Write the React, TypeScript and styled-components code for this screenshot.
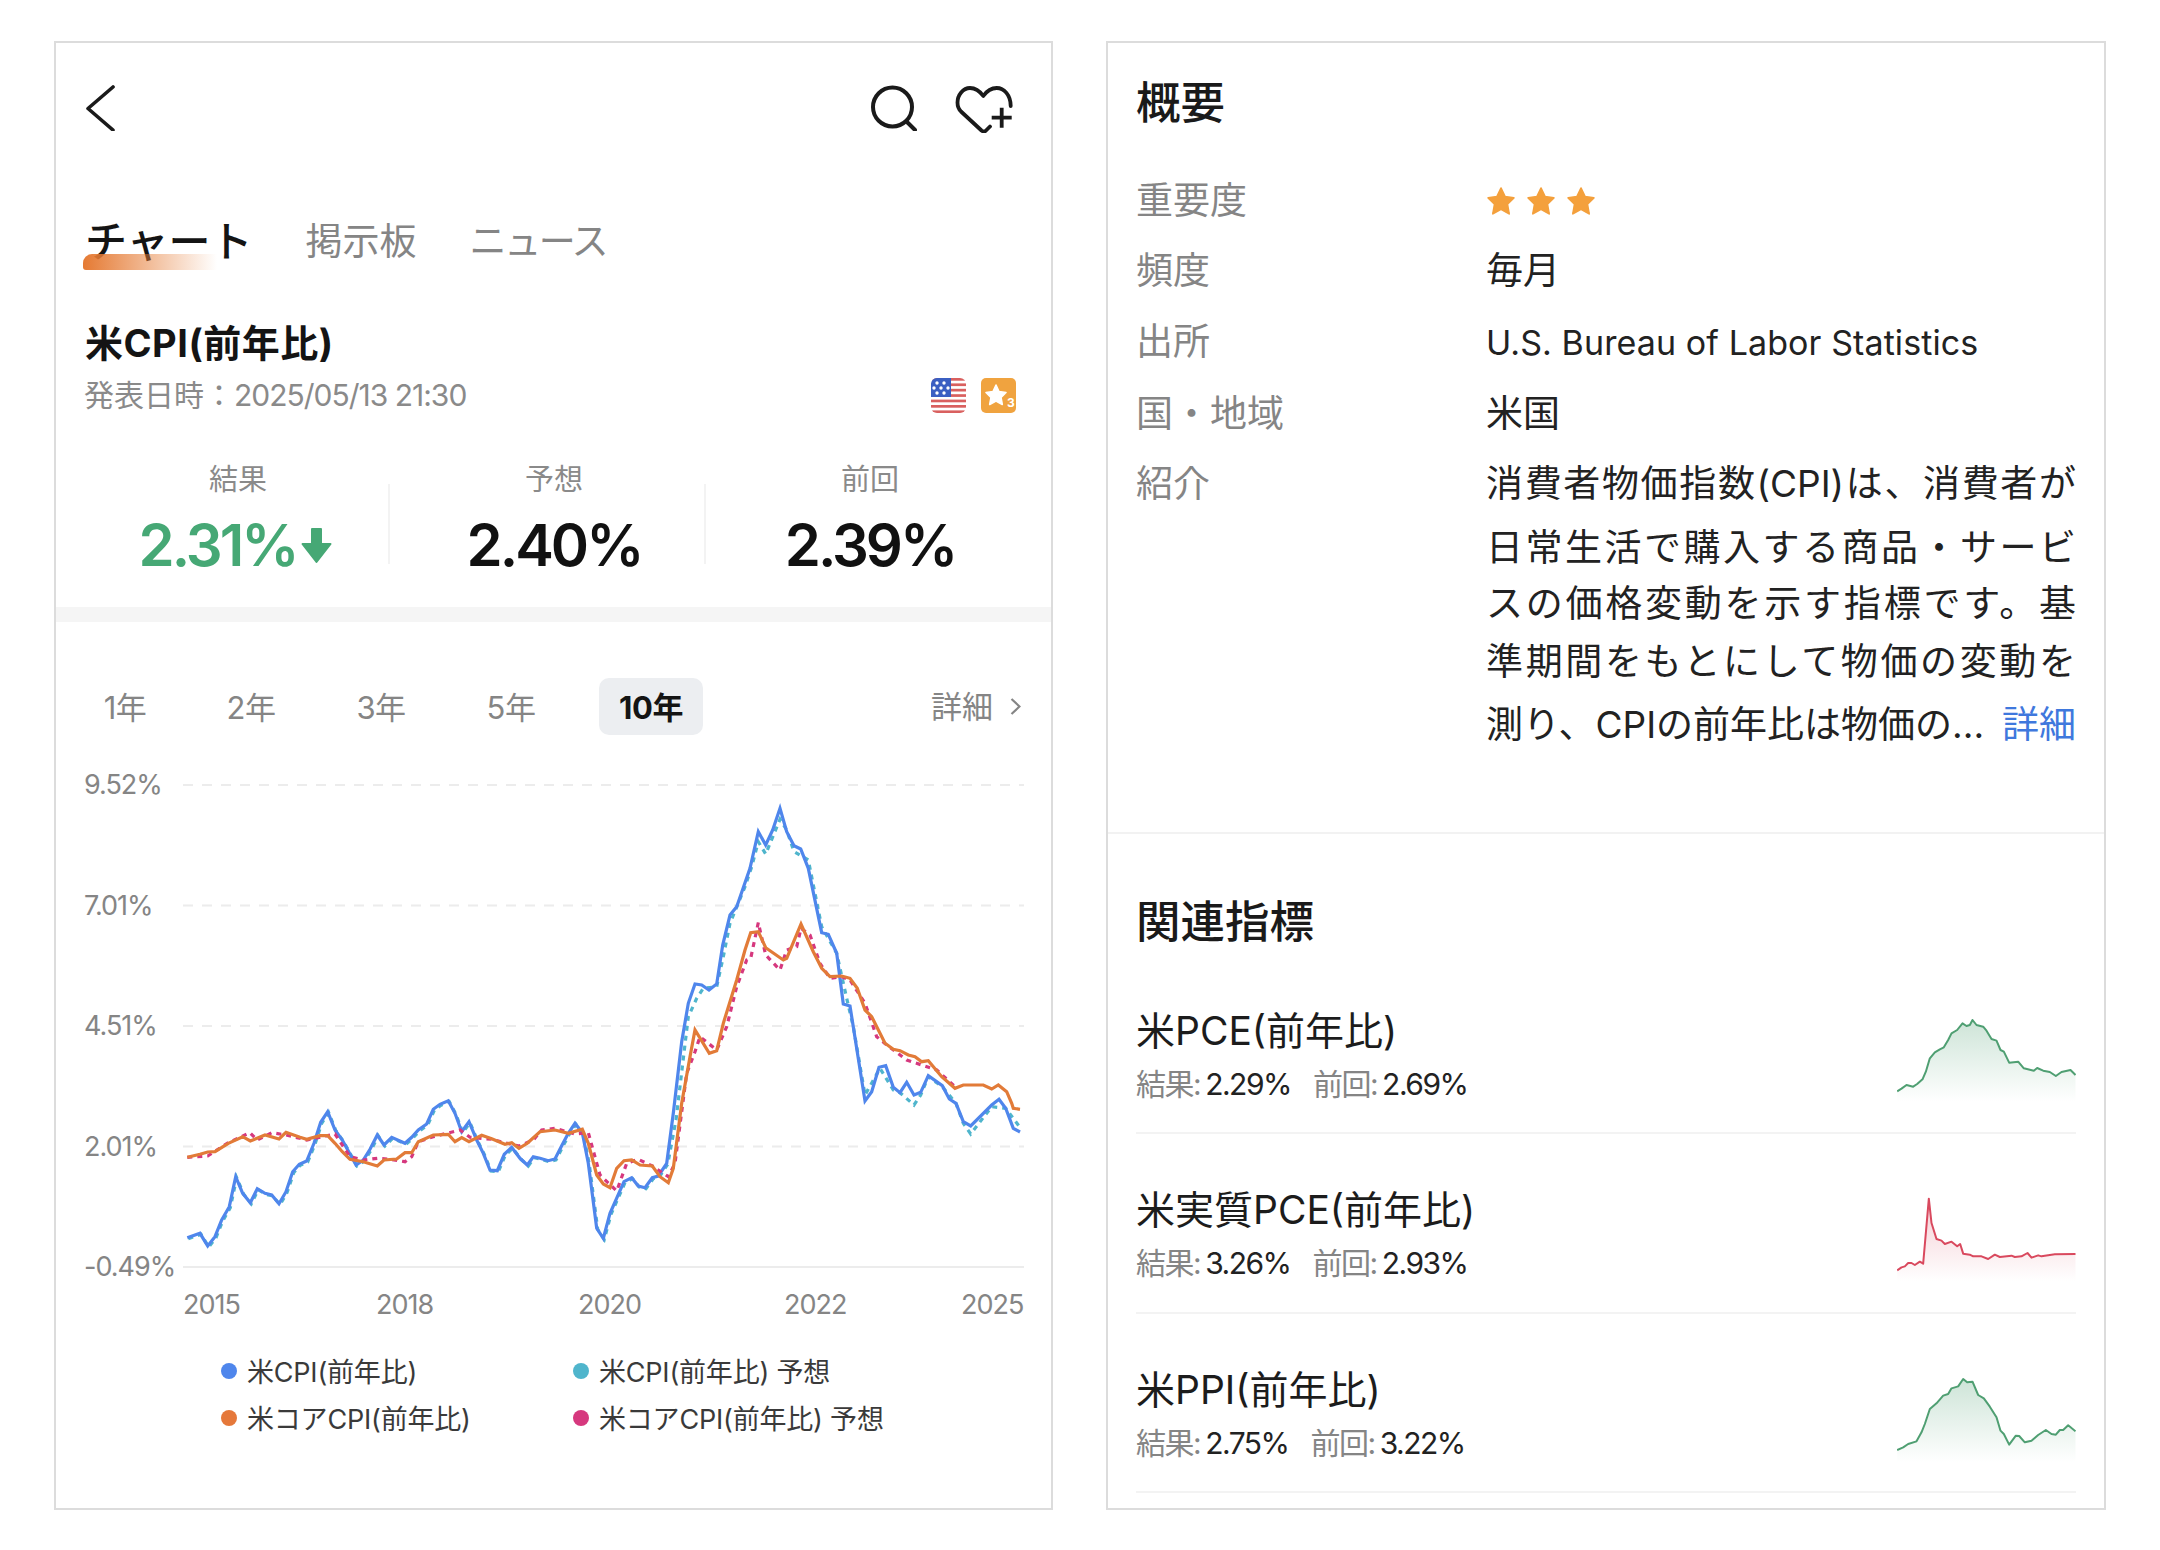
import React from 'react';
import styled, { createGlobalStyle } from 'styled-components';

const FONT = '"Inter", "Noto Sans CJK JP", sans-serif';

const GlobalStyle = createGlobalStyle`
  html, body {
    margin: 0;
    padding: 0;
    background: #fff;
    font-family: ${FONT};
    color: #1c1c1c;
  }
`;

const Page = styled.div`
  display: flex;
  gap: 53px;
  padding: 41px 54px;
`;

const Panel = styled.div`
  box-sizing: border-box;
  flex: none;
  width: ${(p: { $w: number }) => p.$w}px;
  height: 1469px;
  border: 2px solid #dcdcdc;
  overflow: hidden;
`;

const TopBar = styled.div`
  display: flex;
  align-items: flex-start;
  height: 46px;
  padding: 42px 38px 0 30px;
`;

const IconSvg = styled.svg`
  display: block;
  fill: none;
  stroke: #1a1a1a;
  stroke-linecap: round;
  stroke-linejoin: round;
  flex: none;
`;

const TopActions = styled.div`
  display: flex;
  gap: 38px;
  margin-left: auto;
`;

const Tabs = styled.div`
  display: flex;
  align-items: center;
  gap: 53px;
  height: 50px;
  margin-top: 86px;
  padding-left: 29px;
`;

const Tab = styled.div<{ $active?: boolean; $tight?: boolean }>`
  position: relative;
  font-size: ${(p) => (p.$active ? 42 : 37)}px;
  font-weight: ${(p) => (p.$active ? 500 : 400)};
  line-height: 50px;
  letter-spacing: ${(p) => (p.$tight ? -2.4 : 0)}px;
  color: ${(p) => (p.$active ? '#141414' : '#858585')};
  ${(p) =>
    p.$active &&
    `&::after {
      content: '';
      position: absolute;
      left: -2px;
      top: 37px;
      width: 134px;
      height: 16px;
      border-radius: 9px 0 0 3px;
      background: linear-gradient(90deg, #e57a33, rgba(229, 122, 51, 0));
    }`}
`;

const Title = styled.h1`
  margin: 54px 0 0;
  padding-left: 29px;
  font-size: 38px;
  line-height: 44px;
  font-weight: 700;
  letter-spacing: 0.5px;
  color: #141414;
`;

const DateRow = styled.div`
  display: flex;
  align-items: center;
  height: 35px;
  margin-top: 13px;
  padding: 0 35px 0 28px;
`;

const DateText = styled.div`
  font-size: 30px;
  line-height: 35px;
  color: #8a8a8a;
  span {
    letter-spacing: -1px;
  }
`;

const Badges = styled.div`
  display: flex;
  gap: 15px;
  margin-left: auto;
`;

const Stats = styled.div`
  display: grid;
  grid-template-columns: repeat(3, 316px);
  margin-top: 47px;
  padding-left: 24px;
`;

const Stat = styled.div<{ $divider?: boolean }>`
  position: relative;
  text-align: center;
  ${(p) =>
    p.$divider &&
    `&::after {
      content: '';
      position: absolute;
      right: 6px;
      top: 24px;
      width: 2px;
      height: 80px;
      background: #f3f3f3;
    }`}
`;

const StatLabel = styled.div`
  font-size: 29px;
  line-height: 40px;
  color: #8a8a8a;
`;

const StatValue = styled.div<{ $green?: boolean }>`
  display: flex;
  align-items: center;
  justify-content: center;
  gap: 5px;
  margin-top: 10px;
  font-size: 58px;
  line-height: 70px;
  font-weight: 600;
  letter-spacing: -3px;
  color: ${(p) => (p.$green ? '#46a875' : '#111')};
  svg {
    margin-right: 5px;
  }
`;

const Band = styled.div`
  height: 15px;
  margin-top: 27px;
  background: #f5f5f5;
`;

const RangeRow = styled.div`
  display: flex;
  align-items: center;
  gap: 52px;
  height: 57px;
  margin-top: 56px;
  padding: 0 30px 0 29px;
`;

const RangeTab = styled.div<{ $active?: boolean }>`
  box-sizing: border-box;
  display: flex;
  align-items: center;
  justify-content: center;
  width: ${(p) => (p.$active ? 104 : 78)}px;
  height: 57px;
  margin-left: ${(p) => (p.$active ? -3 : 0)}px;
  padding-bottom: 3px;
  border-radius: 10px;
  font-size: 31px;
  font-weight: ${(p) => (p.$active ? 700 : 400)};
  letter-spacing: -0.5px;
  color: ${(p) => (p.$active ? '#141414' : '#858585')};
  background: ${(p) => (p.$active ? '#eceef1' : 'transparent')};
  &:first-child {
    width: 70px;
    margin-left: 5px;
  }
`;

const DetailLink = styled.div`
  display: flex;
  align-items: center;
  gap: 17px;
  margin-left: auto;
  padding-bottom: 5px;
  font-size: 31px;
  color: #858585;
  svg {
    margin-top: 4px;
  }
`;

const ChartSvg = styled.svg`
  display: block;
  margin-top: 25px;
`;

const GridLine = styled.line<{ $solid?: boolean }>`
  stroke: #ececec;
  stroke-width: 2;
  stroke-dasharray: ${(p) => (p.$solid ? 'none' : '10 9')};
`;

const AxisText = styled.text`
  font-family: ${FONT};
  font-size: 27px;
  fill: #858585;
  letter-spacing: -1px;
`;

const SeriesLine = styled.polyline<{ $color: string; $dotted?: boolean }>`
  fill: none;
  stroke: ${(p) => p.$color};
  stroke-width: 3.2;
  stroke-dasharray: ${(p) => (p.$dotted ? '5 5' : 'none')};
  stroke-linejoin: miter;
`;

const Legend = styled.div`
  display: grid;
  grid-template-columns: repeat(2, 352px);
  grid-auto-rows: 47px;
  margin-top: 17px;
  padding-left: 165px;
`;

const LegendItem = styled.div`
  display: flex;
  align-items: center;
  gap: 10px;
  font-size: 27px;
  color: #3a3a3a;
  letter-spacing: -0.2px;
  white-space: nowrap;
`;

const LegendDot = styled.span<{ $color: string }>`
  width: 16px;
  height: 16px;
  border-radius: 50%;
  background: ${(p) => p.$color};
`;

const Overview = styled.div`
  padding: 30px 28px 0 28px;
`;

const Heading = styled.h2`
  margin: 0;
  font-size: 44.5px;
  line-height: 60px;
  font-weight: 500;
  color: #1a1a1a;
`;

const InfoList = styled.div`
  margin-top: 33px;
`;

const InfoRow = styled.div`
  display: flex;
  min-height: 70.3px;
`;

const InfoLabel = styled.div`
  flex: none;
  width: 350px;
  font-size: 37px;
  line-height: 70px;
  color: #858585;
`;

const InfoValue = styled.div`
  flex: 1;
  min-width: 0;
  font-size: 37px;
  line-height: 70px;
  color: #222;
`;

const LatinValue = styled(InfoValue)`
  font-size: 34px;
  line-height: 72px;
  letter-spacing: 0.1px;
`;

const Stars = styled.div`
  display: flex;
  align-items: center;
  gap: 10px;
  height: 70px;
`;

const ParaLine = styled.div<{ $h: number }>`
  font-size: 37px;
  line-height: ${(p) => p.$h}px;
  text-align: justify;
  text-align-last: justify;
  white-space: nowrap;
  color: #222;
`;

const LastLine = styled.div`
  display: flex;
  justify-content: space-between;
  font-size: 37px;
  line-height: 66px;
  white-space: nowrap;
  color: #222;
`;

const MoreLink = styled.span`
  color: #3f78dd;
`;

const SectionRule = styled.div`
  height: 2px;
  margin-top: 74px;
  background: #f2f2f2;
`;

const Related = styled.div`
  padding: 58px 28px 0 28px;
`;

const RelatedItem = styled.div`
  display: flex;
  justify-content: space-between;
  box-sizing: border-box;
  height: 179.5px;
  margin-top: ${(p: { $first?: boolean }) => (p.$first ? 3 : 0)}px;
  padding-top: 51px;
  border-bottom: 2px solid #f3f3f3;
`;

const ItemName = styled.div`
  font-size: 39px;
  line-height: 50px;
  color: #1c1c1c;
`;

const ItemSub = styled.div`
  display: flex;
  gap: 22px;
  margin-top: 8px;
  font-size: 30px;
  line-height: 40px;
  letter-spacing: -1.5px;
  white-space: nowrap;
`;

const SubLabel = styled.span`
  color: #858585;
`;

const SubNum = styled.span`
  margin-left: 5px;
  color: #222;
`;

const SparkSvg = styled.svg`
  display: block;
  flex: none;
  margin-top: 7px;
`;

type Pt = [number, number];

// traced from the reference, each run in its own crop coordinates (3x)
const seg = ([ox, oy]: Pt, n: number[]) => {
  const out: string[] = [];
  for (let i = 0; i < n.length; i += 2) {
    out.push(`${(ox + n[i] / 3).toFixed(1)},${(oy + n[i + 1] / 3).toFixed(1)}`);
  }
  return out;
};

const A: Pt = [170, 1060];
const B: Pt = [620, 780];
const C: Pt = [640, 1040];

const blueLeft = [
  52, 533, 90, 520, 113, 558, 135, 530, 155, 480, 178, 440, 197, 350, 218, 400, 241, 428, 262, 386, 285, 400, 305, 405,
  327, 431, 348, 395, 368, 335, 388, 313, 410, 303, 432, 250, 452, 187, 473, 155, 495, 210, 517, 240, 558, 315, 580, 300,
  600, 268, 622, 225, 642, 255, 665, 232, 705, 250, 725, 232, 745, 210, 770, 192, 790, 148, 810, 133, 835, 122, 855, 160,
  875, 215, 897, 185, 920, 240, 940, 280, 960, 330, 982, 332, 1003, 283, 1025, 262, 1050, 295, 1072, 315, 1090, 290,
  1110, 295, 1135, 302, 1155, 297, 1175, 257, 1195, 220, 1215, 190, 1237, 218, 1255, 310, 1280, 505, 1300, 535, 1320, 460,
  1362, 365, 1385, 353, 1405, 378, 1425, 383, 1447, 353, 1465, 348, 1490, 310,
];

const blue = [
  ...seg(A, blueLeft),
  ...seg(C, [100, 220]),
  ...seg(B, [
    185, 785, 205, 670, 225, 612, 245, 615, 267, 630, 290, 612, 308, 495, 330, 405, 350, 380, 390, 265, 415, 155, 437, 195,
    458, 150, 480, 85, 500, 155, 522, 197, 542, 207, 565, 265, 605, 458, 625, 463, 650, 520, 670, 672, 690, 678,
  ]),
  ...seg(C, [
    675, 183, 695, 155, 717, 82, 737, 77, 760, 142, 780, 158, 800, 127, 822, 165, 842, 157, 865, 107, 907, 137, 928, 177,
    948, 190, 970, 245, 992, 258, 1055, 195, 1077, 178, 1097, 205, 1120, 265, 1140, 276,
  ]),
].join(' ');

const teal = [
  ...seg([171, 1061], blueLeft),
  ...seg(C, [108, 240]),
  ...seg(B, [
    205, 710, 230, 655, 250, 625, 290, 620, 310, 530, 330, 430, 375, 320, 395, 260, 415, 185, 437, 222, 480, 118, 500, 150,
    522, 215, 565, 240, 605, 440, 650, 520, 680, 655, 700, 740,
  ]),
  ...seg(C, [
    675, 165, 720, 85, 760, 150, 780, 158, 822, 195, 842, 165, 865, 110, 907, 140, 948, 190, 970, 250, 992, 282, 1055, 200,
    1097, 205, 1140, 262,
  ]),
].join(' ');

const orange = [
  ...seg(A, [
    52, 292, 90, 283, 113, 276, 135, 275, 175, 250, 218, 230, 241, 243, 285, 225, 327, 237, 348, 217, 390, 232, 410, 238,
    450, 227, 473, 227, 495, 250, 517, 275, 540, 298, 580, 305, 622, 318, 642, 300, 680, 297, 705, 278, 725, 278, 745, 245,
    790, 225, 835, 223, 855, 245, 875, 233, 897, 245, 935, 226, 965, 236, 1005, 253, 1025, 248, 1047, 265, 1072, 250,
    1110, 215, 1155, 210, 1195, 220, 1237, 208, 1255, 250, 1280, 345, 1300, 372, 1320, 383, 1340, 325, 1362, 302, 1385, 300,
    1410, 315, 1447, 318, 1470, 350, 1495, 368,
  ]),
  ...seg(C, [100, 385, 125, 190, 150, 50]),
  ...seg(B, [
    225, 750, 268, 820, 290, 812, 310, 730, 350, 600, 375, 510, 392, 458, 415, 455, 437, 503, 490, 540, 500, 535, 543, 432,
    580, 515, 605, 565, 630, 590, 665, 588, 690, 595, 712, 625, 735, 690, 755, 710, 795, 790, 820, 808, 840, 812, 865, 825,
    885, 830, 905, 845, 925, 842, 965, 890, 1005, 925, 1030, 915, 1090, 915, 1115, 927, 1135, 915, 1160, 935, 1175, 970,
  ]),
  ...seg(C, [1120, 205, 1140, 208]),
].join(' ');

const magenta = [
  ...seg(A, [
    52, 292, 113, 288, 175, 248, 240, 218, 262, 240, 305, 218, 348, 225, 410, 240, 495, 222, 540, 290, 580, 300, 622, 295,
    660, 298, 705, 305, 725, 290, 745, 245, 790, 230, 870, 210, 900, 232, 965, 238, 1005, 248, 1047, 258, 1090, 240,
    1115, 210, 1155, 205, 1215, 222, 1255, 218, 1290, 345, 1340, 393, 1370, 310, 1405, 298, 1447, 318, 1495, 350,
  ]),
  ...seg(C, [105, 370, 140, 100, 165, 35]),
  ...seg(B, [
    240, 770, 290, 810, 320, 740, 350, 620, 380, 540, 392, 535, 415, 428, 437, 525, 480, 570, 500, 510, 530, 500, 543, 445,
    570, 465, 600, 550, 630, 595, 665, 590, 690, 600, 735, 670, 770, 770, 800, 795, 860, 840, 905, 855, 950, 870, 1005, 920,
  ]),
].join(' ');

const gridYs = [785, 905.5, 1026, 1146.5];
const yLabels: [string, number][] = [
  ['9.52%', 785],
  ['7.01%', 905.5],
  ['4.51%', 1026],
  ['2.01%', 1146.5],
  ['-0.49%', 1267],
];
const xLabels: [string, number][] = [
  ['2015', 183],
  ['2018', 376],
  ['2020', 578],
  ['2022', 784],
  ['2025', 961],
];

const sparks = [
  {
    color: '#4f9f72',
    y0: 39,
    pts: [
      52, 274, 65, 266, 80, 255, 100, 260, 112, 252, 128, 238, 138, 215, 150, 175, 165, 157, 180, 148, 192, 142, 205, 120,
      215, 100, 232, 90, 248, 70, 260, 78, 270, 75, 278, 60, 290, 75, 310, 80, 320, 92, 335, 117, 350, 122, 362, 150, 372, 155,
      388, 188, 415, 185, 432, 205, 462, 212, 472, 204, 490, 212, 510, 216, 528, 228, 545, 216, 572, 210, 587, 225,
    ],
    bottom: 305,
  },
  {
    color: '#d9495e',
    y0: 577,
    pts: [
      52, 812, 65, 803, 75, 800, 85, 790, 95, 790, 105, 796, 120, 786, 130, 792, 147, 597, 155, 670, 170, 718, 185, 723, 195, 733,
      215, 726, 232, 740, 241, 733, 250, 762, 270, 765, 280, 770, 305, 770, 325, 778, 345, 765, 360, 772, 395, 768, 405, 772,
      425, 770, 443, 760, 455, 774, 475, 767, 485, 770, 525, 764, 587, 763,
    ],
    bottom: 845,
  },
  {
    color: '#4f9f72',
    y0: 1114,
    pts: [
      52, 1348, 70, 1340, 85, 1330, 110, 1322, 125, 1295, 135, 1270, 150, 1225, 170, 1208, 190, 1185, 205, 1180, 215, 1163,
      235, 1157, 250, 1135, 262, 1145, 278, 1143, 295, 1183, 312, 1193, 330, 1218, 350, 1250, 362, 1290, 372, 1300, 388, 1332,
      408, 1305, 418, 1306, 435, 1325, 455, 1320, 475, 1303, 498, 1288, 515, 1300, 528, 1302, 540, 1288, 550, 1288, 565, 1274,
      587, 1292,
    ],
    bottom: 1385,
  },
];

const related = [
  { name: '米PCE(前年比)', result: '2.29%', prev: '2.69%' },
  { name: '米実質PCE(前年比)', result: '3.26%', prev: '2.93%' },
  { name: '米PPI(前年比)', result: '2.75%', prev: '3.22%' },
];

const Spark: React.FC<{ index: number }> = ({ index }) => {
  const s = sparks[index];
  const line = seg([0, 0], s.pts.map((v) => v * 3)).join(' ');
  const id = `spark-${index}`;
  return (
    <SparkSvg width={179} height={90} viewBox={`52 ${s.y0} 536 270`}>
      <defs>
        <linearGradient id={id} x1="0" y1="0" x2="0" y2="1">
          <stop offset="0" stopColor={s.color} stopOpacity={0.28} />
          <stop offset="1" stopColor={s.color} stopOpacity={0} />
        </linearGradient>
      </defs>
      <polygon points={`${line} 587,${s.bottom} 52,${s.bottom}`} fill={`url(#${id})`} />
      <polyline points={line} fill="none" stroke={s.color} strokeWidth={6} strokeLinejoin="round" />
    </SparkSvg>
  );
};

const StarIcon: React.FC = () => (
  <svg width="30" height="30" viewBox="0 0 28 28">
    <polygon
      points="14,2 17.8,10 26,11 20,17 21.6,26 14,21.6 6.4,26 8,17 2,11 10.2,10"
      fill="#f4a03c"
      stroke="#f4a03c"
      strokeWidth="1.6"
      strokeLinejoin="round"
    />
  </svg>
);

const FlagIcon: React.FC = () => (
  <svg width="35" height="35" viewBox="0 0 35 35">
    <defs>
      <clipPath id="flag-clip">
        <rect width="35" height="35" rx="6" />
      </clipPath>
    </defs>
    <g clipPath="url(#flag-clip)">
      <rect width="35" height="35" fill="#fff" />
      {[0, 5.4, 10.8, 16.2, 21.6, 27, 32.4].map((y) => (
        <rect key={y} y={y} width="35" height="2.7" fill="#d9605f" />
      ))}
      <rect width="20" height="19" fill="#3b5fc2" />
      {[
        [6, 5],
        [13, 5],
        [3, 10],
        [10, 10],
        [17, 10],
        [6, 15],
        [13, 15],
      ].map(([cx, cy]) => (
        <circle key={`${cx}-${cy}`} cx={cx} cy={cy} r="1.7" fill="#fff" />
      ))}
    </g>
  </svg>
);

const ImportanceIcon: React.FC = () => (
  <svg width="35" height="35" viewBox="0 0 35 35">
    <rect width="35" height="35" rx="5" fill="#f0a33f" />
    <polygon
      points="15,7 18,13.5 25,14.5 20,19.5 21.3,26.5 15,23 8.7,26.5 10,19.5 5,14.5 12,13.5"
      fill="#fff"
      stroke="#fff"
      strokeWidth="1.6"
      strokeLinejoin="round"
    />
    <text x="26" y="29" fontSize="12" fontWeight="700" fill="#fff" fontFamily="Inter, sans-serif">
      3
    </text>
  </svg>
);

const App: React.FC = () => {
  return (
    <Page>
      <GlobalStyle />
      <Panel $w={999}>
        <TopBar>
          <IconSvg width="30" height="46" viewBox="0 0 30 46" strokeWidth="3.6">
            <polyline points="27,2 2,23.5 27,45" />
          </IconSvg>
          <TopActions>
            <IconSvg width="46" height="46" viewBox="0 0 46 46" strokeWidth="4">
              <circle cx="21.5" cy="22" r="19.5" />
              <line x1="36" y1="37" x2="44" y2="45" />
            </IconSvg>
            <IconSvg width="58" height="48" viewBox="0 0 58 48" strokeWidth="3.8">
              <path d="M55.7 21C55.7 10 49 3 41.7 3C36 3 31.5 6.5 28.3 11C25 6.5 20.5 3 15 3C8 3 2.5 10 2.5 17.5C2.5 21 3.5 24 6 26.5L26.5 45.5Q29 47.5 31 45.5L35 41.5" />
              <path d="M36.7 32.7H56.7M46.7 22.7V42.7" strokeLinecap="butt" />
            </IconSvg>
          </TopActions>
        </TopBar>
        <Tabs>
          <Tab $active>チャート</Tab>
          <Tab>掲示板</Tab>
          <Tab $tight>ニュース</Tab>
        </Tabs>
        <Title>米CPI(前年比)</Title>
        <DateRow>
          <DateText>
            発表日時：<span>2025/05/13 21:30</span>
          </DateText>
          <Badges>
            <FlagIcon />
            <ImportanceIcon />
          </Badges>
        </DateRow>
        <Stats>
          <Stat $divider>
            <StatLabel>結果</StatLabel>
            <StatValue $green>
              2.31%
              <svg width="31" height="38" viewBox="0 0 31 38">
                <path
                  d="M11 3H20V18H29.5L15.5 36L1.5 18H11Z"
                  fill="#46a875"
                  stroke="#46a875"
                  strokeWidth="2"
                  strokeLinejoin="round"
                />
              </svg>
            </StatValue>
          </Stat>
          <Stat $divider>
            <StatLabel>予想</StatLabel>
            <StatValue>2.40%</StatValue>
          </Stat>
          <Stat>
            <StatLabel>前回</StatLabel>
            <StatValue>2.39%</StatValue>
          </Stat>
        </Stats>
        <Band />
        <RangeRow>
          <RangeTab>1年</RangeTab>
          <RangeTab>2年</RangeTab>
          <RangeTab>3年</RangeTab>
          <RangeTab>5年</RangeTab>
          <RangeTab $active>10年</RangeTab>
          <DetailLink>
            詳細
            <svg width="11" height="17" viewBox="0 0 11 17" fill="none" stroke="#858585" strokeWidth="2.2">
              <polyline points="1.5,1 9.5,8.5 1.5,16" />
            </svg>
          </DetailLink>
        </RangeRow>
        <ChartSvg width={995} height={570} viewBox="56 760 995 570">
          {gridYs.map((y) => (
            <GridLine key={y} x1={183} x2={1024} y1={y} y2={y} />
          ))}
          <GridLine $solid x1={183} x2={1024} y1={1267} y2={1267} />
          {yLabels.map(([label, y]) => (
            <AxisText key={label} x={84} y={y + 9}>
              {label}
            </AxisText>
          ))}
          {xLabels.map(([label, x]) => (
            <AxisText key={label} x={x} y={1314}>
              {label}
            </AxisText>
          ))}
          <SeriesLine $color="#4fb5cc" $dotted points={teal} />
          <SeriesLine $color="#4f86ec" points={blue} />
          <SeriesLine $color="#d6387e" $dotted points={magenta} />
          <SeriesLine $color="#e27b38" points={orange} />
        </ChartSvg>
        <Legend>
          <LegendItem>
            <LegendDot $color="#4f86ec" />
            米CPI(前年比)
          </LegendItem>
          <LegendItem>
            <LegendDot $color="#4fb5cc" />
            米CPI(前年比) 予想
          </LegendItem>
          <LegendItem>
            <LegendDot $color="#e5783a" />
            米コアCPI(前年比)
          </LegendItem>
          <LegendItem>
            <LegendDot $color="#d6387e" />
            米コアCPI(前年比) 予想
          </LegendItem>
        </Legend>
      </Panel>
      <Panel $w={1000}>
        <Overview>
          <Heading>概要</Heading>
          <InfoList>
            <InfoRow>
              <InfoLabel>重要度</InfoLabel>
              <Stars>
                <StarIcon />
                <StarIcon />
                <StarIcon />
              </Stars>
            </InfoRow>
            <InfoRow>
              <InfoLabel>頻度</InfoLabel>
              <InfoValue>毎月</InfoValue>
            </InfoRow>
            <InfoRow>
              <InfoLabel>出所</InfoLabel>
              <LatinValue>U.S. Bureau of Labor Statistics</LatinValue>
            </InfoRow>
            <InfoRow>
              <InfoLabel>国・地域</InfoLabel>
              <InfoValue>米国</InfoValue>
            </InfoRow>
            <InfoRow>
              <InfoLabel>紹介</InfoLabel>
              <InfoValue>
                <ParaLine $h={70}>消費者物価指数(CPI)は、消費者が</ParaLine>
                <ParaLine $h={57}>日常生活で購入する商品・サービ</ParaLine>
                <ParaLine $h={56}>スの価格変動を示す指標です。基</ParaLine>
                <ParaLine $h={60}>準期間をもとにして物価の変動を</ParaLine>
                <LastLine>
                  <span>測り、CPIの前年比は物価の...</span>
                  <MoreLink>詳細</MoreLink>
                </LastLine>
              </InfoValue>
            </InfoRow>
          </InfoList>
        </Overview>
        <SectionRule />
        <Related>
          <Heading>関連指標</Heading>
          {related.map((item, i) => (
            <RelatedItem key={item.name} $first={i === 0}>
              <div>
                <ItemName>{item.name}</ItemName>
                <ItemSub>
                  <span>
                    <SubLabel>結果:</SubLabel>
                    <SubNum>{item.result}</SubNum>
                  </span>
                  <span>
                    <SubLabel>前回:</SubLabel>
                    <SubNum>{item.prev}</SubNum>
                  </span>
                </ItemSub>
              </div>
              <Spark index={i} />
            </RelatedItem>
          ))}
        </Related>
      </Panel>
    </Page>
  );
};

export default App;
